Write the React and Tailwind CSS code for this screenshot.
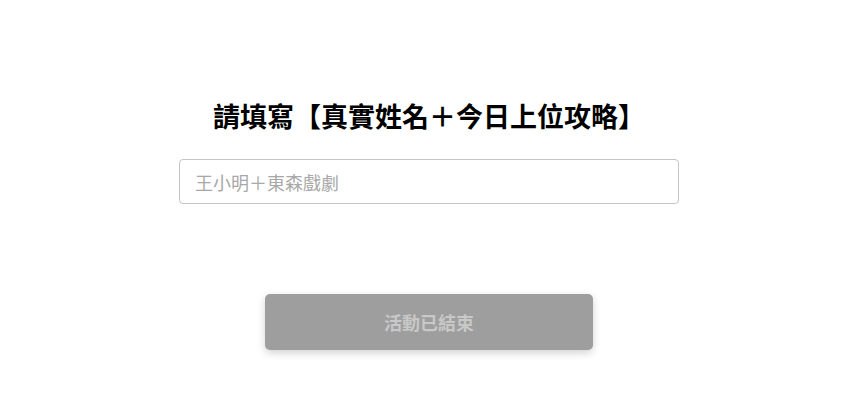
export default function App() {
  return (
    <div
      className="min-h-[418px] bg-white flex flex-col items-center pl-[7px]"
      style={{ fontFamily: '"Noto Sans CJK TC", "Noto Sans", sans-serif' }}
    >
      <h1 className="mt-[98px] h-[36px] text-[27px] leading-[36px] font-bold text-black">
        請填寫【真實姓名＋今日上位攻略】
      </h1>

      <input
        type="text"
        placeholder="王小明＋東森戲劇"
        className="mt-[25px] w-[500px] h-[45px] px-[15px] rounded border border-[#c4c4c4] text-[18px] text-[#333] placeholder:text-[#a8a8a8] outline-none"
      />

      <button
        disabled
        className="mt-[90px] w-[328px] h-[56px] rounded-[5px] bg-[#9e9e9e] text-[#c8c8c8] text-[18px] font-bold shadow-[0_3px_8px_rgba(0,0,0,0.18)]"
      >
        活動已結束
      </button>
    </div>
  );
}
